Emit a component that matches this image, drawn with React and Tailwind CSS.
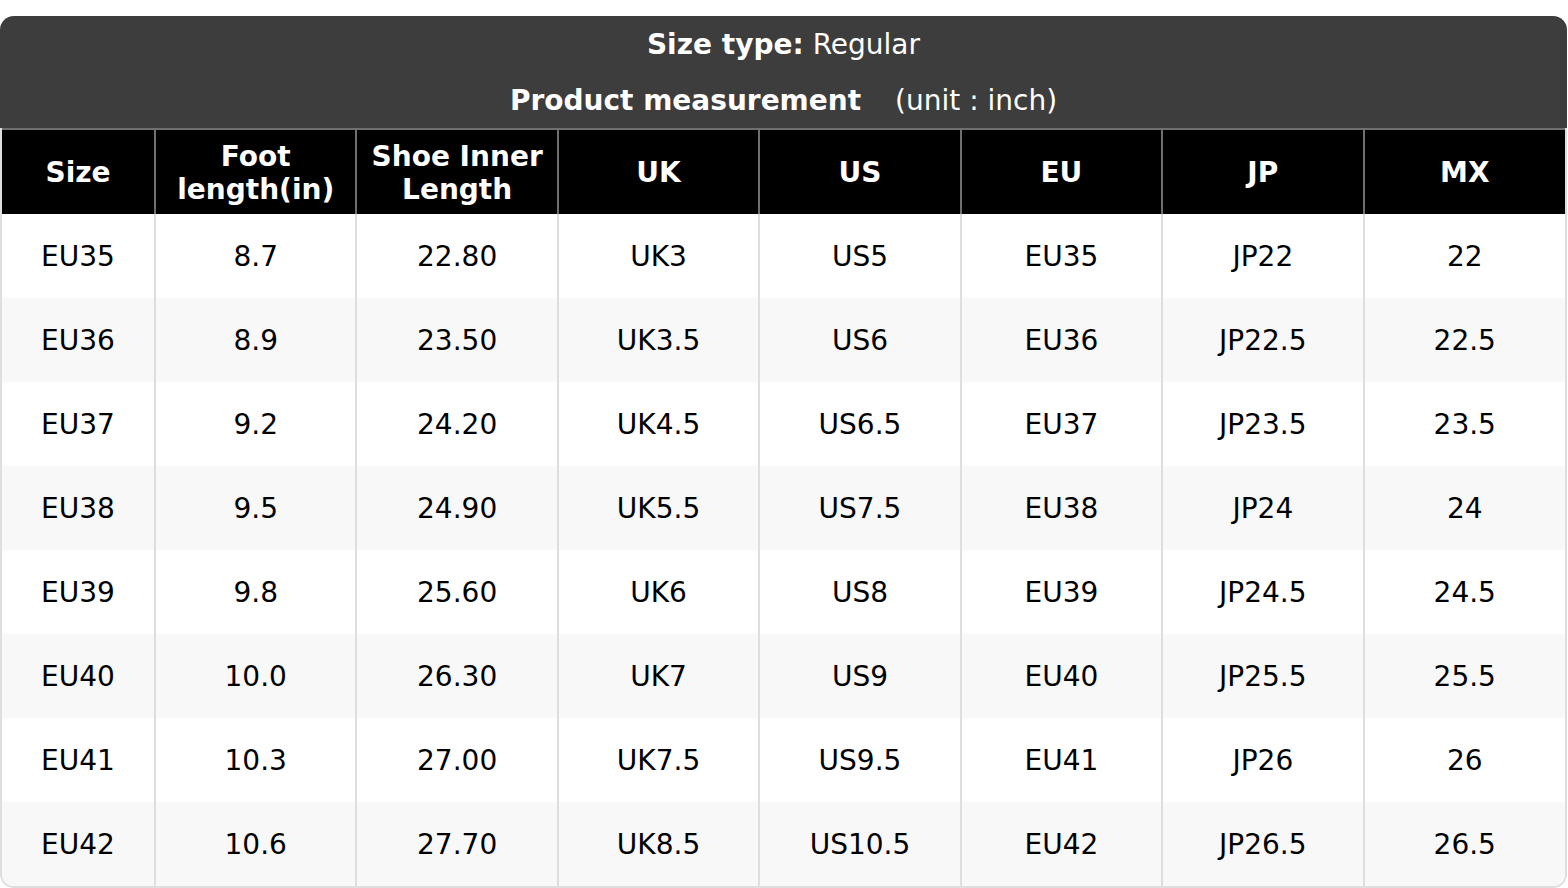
const HEADERS = [
  'Size',
  ['Foot', 'length(in)'],
  ['Shoe Inner', 'Length'],
  'UK',
  'US',
  'EU',
  'JP',
  'MX'
];

const ROWS = [
  ['EU35', '8.7', '22.80', 'UK3', 'US5', 'EU35', 'JP22', '22'],
  ['EU36', '8.9', '23.50', 'UK3.5', 'US6', 'EU36', 'JP22.5', '22.5'],
  ['EU37', '9.2', '24.20', 'UK4.5', 'US6.5', 'EU37', 'JP23.5', '23.5'],
  ['EU38', '9.5', '24.90', 'UK5.5', 'US7.5', 'EU38', 'JP24', '24'],
  ['EU39', '9.8', '25.60', 'UK6', 'US8', 'EU39', 'JP24.5', '24.5'],
  ['EU40', '10.0', '26.30', 'UK7', 'US9', 'EU40', 'JP25.5', '25.5'],
  ['EU41', '10.3', '27.00', 'UK7.5', 'US9.5', 'EU41', 'JP26', '26'],
  ['EU42', '10.6', '27.70', 'UK8.5', 'US10.5', 'EU42', 'JP26.5', '26.5']
];

export default function App() {
  return (
    <div className="min-h-screen bg-white pt-4 font-['DejaVu_Sans',sans-serif] text-[28px]">
      <div className="w-[1567px] overflow-hidden rounded-t-[14px]">
        {/* Title block */}
        <div className="flex h-[112px] flex-col bg-[#3d3d3d] pt-[1px] text-white">
          <div className="flex h-[56px] items-center justify-center">
            <span className="font-bold">Size type:</span>
            <span className="ml-[9px]">Regular</span>
          </div>
          <div className="flex h-[55px] items-center justify-center pt-[1px]">
            <span className="font-bold">Product measurement</span>
            <span className="ml-[34px]">(unit : inch)</span>
          </div>
        </div>
      </div>

      <div className="w-[1567px] overflow-hidden rounded-b-[14px] border-x-2 border-b-2 border-[#dedede]">
        <table className="w-full table-fixed border-collapse">
          <colgroup>
            <col className="w-[153px]" />
            <col />
            <col />
            <col />
            <col />
            <col />
            <col />
            <col />
          </colgroup>
          <thead>
            <tr className="h-[85px] bg-black text-white">
              {HEADERS.map((h, i) => (
                <th
                  key={i}
                  className={`border-t-2 border-[#6f6f6f] px-2 pt-[1px] text-center font-bold leading-[33px] ${
                    i > 0 ? 'border-l-2' : ''
                  }`}
                >
                  {Array.isArray(h) ? (
                    <>
                      {h[0]}
                      <br />
                      {h[1]}
                    </>
                  ) : (
                    h
                  )}
                </th>
              ))}
            </tr>
          </thead>
          <tbody>
            {ROWS.map((row, r) => (
              <tr key={r} className={`h-[84px] ${r % 2 ? 'bg-[#f8f8f8]' : 'bg-white'}`}>
                {row.map((cell, c) => (
                  <td
                    key={c}
                    className={`pt-[1px] text-center leading-[33px] text-black ${
                      c > 0 ? 'border-l-2 border-[#dedede]' : ''
                    }`}
                  >
                    {cell}
                  </td>
                ))}
              </tr>
            ))}
          </tbody>
        </table>
      </div>
    </div>
  );
}
